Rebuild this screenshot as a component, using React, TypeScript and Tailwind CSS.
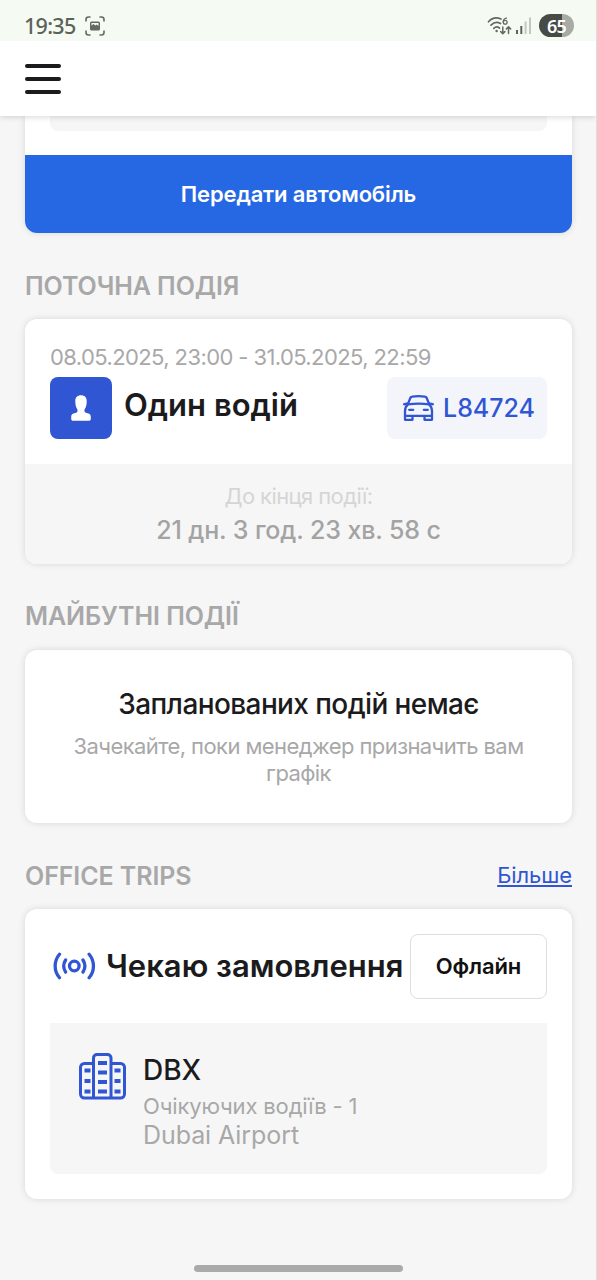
import type { ReactNode } from 'react';

function StatusBar() {
  return (
    <div className="relative z-20 h-[41px] shrink-0 bg-[#f5fbf3] flex items-center justify-between pl-6 pr-[22px] pt-[13px] pb-[3px]">
      <div className="flex items-center gap-2.5">
        <span className="font-['Noto_Sans',sans-serif] font-medium text-[21.5px] leading-6 tracking-[-0.7px] text-[#5d625b] w-[51px] whitespace-nowrap">19:35</span>
        <svg width="20" height="20" viewBox="0 0 20 20" fill="none" stroke="#646963" strokeWidth="1.6" strokeLinecap="round">
          <path d="M1 5V3.5C1 2 2 1 3.5 1H5M15 1h1.5C18 1 19 2 19 3.5V5M19 15v1.5c0 1.5-1 2.5-2.5 2.5H15M5 19H3.5C2 19 1 18 1 16.5V15" />
          <rect x="5" y="5.5" width="10" height="9" rx="1.5" fill="#646963" stroke="none" />
          <path d="M6.5 9.7l2-1.7 2 1.4 1.2-.8 1.8 1.3V7h-7z" fill="#f5fbf3" stroke="none" />
        </svg>
      </div>
      <div className="flex items-center">
        <svg width="26" height="20" viewBox="0 0 26 20" fill="none" stroke="#646963" strokeWidth="1.7" strokeLinecap="round">
          <path d="M1.5 5.8C5 1.8 10 1.3 14 3M4 9.2c3-3 6.5-3.3 9.5-1.7M6.8 12.3c1.8-1.7 4-1.7 5.7-.2" />
          <circle cx="9.6" cy="15" r="1.2" fill="#646963" stroke="none" />
          <path d="M19.5 2.2c-2 .3-3.3 2-3.3 3.9" strokeWidth="1.3" />
          <circle cx="18.2" cy="6.3" r="1.9" strokeWidth="1.3" />
          <path d="M15.8 11v6.5M13.7 15.6l2.1 2 2.1-2M21.5 17.5V11M19.4 12.9l2.1-2 2.1 2" strokeWidth="1.5" />
        </svg>
        <svg width="16" height="17" viewBox="0 0 16 17" className="ml-[3px]">
          <rect x="0" y="13" width="2" height="4" fill="#5d625b" />
          <rect x="4.3" y="9" width="2" height="8" fill="#5d625b" />
          <rect x="8.6" y="4.5" width="2" height="12.5" fill="#c2c7c0" />
          <rect x="13" y="0.5" width="2" height="16.5" fill="#c2c7c0" />
        </svg>
        <div className="ml-[7px] w-[35px] h-[23px] rounded-full bg-linear-to-r from-[#464b45] from-65% to-[#a6aba4] to-65% flex items-center justify-center">
          <span className="font-['Noto_Sans',sans-serif] font-semibold text-[18px] tracking-[-0.8px] leading-none text-white">65</span>
        </div>
      </div>
    </div>
  );
}

function PersonIcon() {
  return (
    <svg width="20" height="26" viewBox="0 0 20 26" fill="white">
      <path d="M10 .3C6.500.3 4.300 2.500 4.300 5.700c0 3.700.5 6.800 2.200 8.800v1.600c0 .9-.4 1.300-1.300 1.600L2.500 18.500C.8 19.100.2 20.400.2 22v1.700c0 1.400.8 2.100 2.100 2.100h15.400c1.300 0 2.100-.7 2.100-2.100V22c0-1.600-.6-2.900-2.300-3.500l-2.700-.8c-.9-.3-1.300-.7-1.300-1.600v-1.600c1.700-2 2.200-5.100 2.200-8.800C15.700 2.500 13.500.3 10 .3z" />
    </svg>
  );
}

function CarIcon() {
  return (
    <svg width="31" height="26" viewBox="0 0 31 26" fill="none" stroke="#3056d3" strokeWidth="2.3" strokeLinecap="round" strokeLinejoin="round">
      <path d="M1.2 9.3C2.3 8.7 3.5 8.7 5.2 8.8M29.8 9.3c-1.1-.6-2.3-.6-4-.5M4.8 9.4L7.3 3c.4-.9.9-1.3 1.900-1.4 4.2-.6 8.4-.6 12.6 0 1 .1 1.5.5 1.900 1.4l2.5 6.4" />
      <path d="M4.8 9.4c7.1-1 14.3-1 21.4 0 1.900 1.900 2.800 4.100 2.800 6.800v8.600h-7.500v-4h-12v4H2v-8.600c0-2.700.9-4.900 2.800-6.800zM2 20.800h7.500M21.500 20.800H29" />
      <path d="M6.2 14.8h4M20.8 14.8h4" />
    </svg>
  );
}

function BroadcastIcon() {
  return (
    <svg width="44" height="28" viewBox="0 0 44 28" fill="none" stroke="#3056d3" strokeWidth="3.3" strokeLinecap="round">
      <circle cx="21.3" cy="14" r="4.8" />
      <path d="M12.6 8c-2.3 3.6-2.3 8.4 0 12M30 8c2.3 3.6 2.3 8.4 0 12M6.5 2.2C.7 9 .7 19 6.5 25.8M36.1 2.2c5.8 6.8 5.8 16.8 0 23.6" />
    </svg>
  );
}

function OfficeIcon() {
  return (
    <svg width="48" height="47" viewBox="0 0 48 47" fill="none" stroke="#3056d3" strokeWidth="3">
      <path d="M15.5 45V5c0-2 1.5-3.5 3.5-3.5h10.5c2 0 3.5 1.5 3.5 3.5v40M15.5 10.5H6.5c-2.3 0-4 1.7-4 4V41c0 2.3 1.7 4 4 4h36c2.3 0 4-1.7 4-4V14.5c0-2.3-1.7-4-4-4H33" />
      <path d="M6.5 17.5h6M6.5 28h6M6.5 38.5h6M20 10h9M20 19.5h9M20 29h9M20 38.5h9M36.5 17.5h6M36.5 28h6M36.5 38.5h6" strokeWidth="4" />
    </svg>
  );
}

function Card({ className = '', children }: { className?: string; children: ReactNode }) {
  return (
    <div className={`bg-white rounded-xl overflow-hidden shadow-[0_0_7px_rgba(0,0,0,0.13)] ${className}`}>
      {children}
    </div>
  );
}

function SectionTitle({ children }: { children: ReactNode }) {
  return <h2 className="text-[25px] leading-[30px] tracking-[-0.08px] font-semibold text-[#a8a8a8] whitespace-nowrap">{children}</h2>;
}

export default function App() {
  return (
    <div className="w-[597px] h-[1280px] flex flex-col overflow-hidden bg-[#f6f6f6] border-r border-[#dedede] font-['Inter',sans-serif] text-[#1b1b1d]">
      <StatusBar />

      <header className="relative z-10 h-[75px] shrink-0 bg-white shadow-[0_1px_6px_rgba(0,0,0,0.16)] flex items-center pl-[25px]">
        <button aria-label="Menu" className="w-9 flex flex-col gap-[9px]">
          <span className="h-1 rounded-full bg-[#1b1b1d]" />
          <span className="h-1 rounded-full bg-[#1b1b1d]" />
          <span className="h-1 rounded-full bg-[#1b1b1d]" />
        </button>
      </header>

      <main className="flex flex-col pl-[25px] pr-6">
        <div className="h-[117px] bg-white rounded-b-xl overflow-hidden shadow-[0_0_7px_rgba(0,0,0,0.13)] flex flex-col">
          <div className="h-[15px] mx-[25px] mb-6 bg-[#f6f6f6] rounded-b-lg" />
          <button className="flex-1 bg-[#2668e4] text-white text-[22px] tracking-[-0.15px] font-semibold">Передати автомобіль</button>
        </div>

        <div className="mt-[38px] mb-[18px]">
          <SectionTitle>ПОТОЧНА ПОДІЯ</SectionTitle>
        </div>
        <Card className="h-[245px] flex flex-col">
          <div className="h-[145px] px-[25px] pt-[25px]">
            <p className="text-[22px] leading-[27px] tracking-[-0.6px] text-[#a8a8a8] whitespace-nowrap">08.05.2025, 23:00 - 31.05.2025, 22:59</p>
            <div className="mt-[6px] flex items-center">
              <div className="size-[62px] rounded-lg bg-[#3056d3] flex items-center justify-center">
                <PersonIcon />
              </div>
              <h3 className="ml-3 mb-1.5 text-[31px] leading-9 font-semibold whitespace-nowrap">Один водій</h3>
              <div className="ml-auto w-40 h-[62px] rounded-lg bg-[#f3f5fb] flex items-center pl-4 gap-[9px]">
                <CarIcon />
                <span className="text-[25px] leading-[30px] font-medium text-[#3056d3]">L84724</span>
              </div>
            </div>
          </div>
          <div className="flex-1 bg-[#f6f6f6] text-center pt-[18px]">
            <p className="text-[22px] leading-[28px] tracking-[-0.6px] text-[#d5d5d5]">До кінця події:</p>
            <p className="mt-[5px] text-[25px] leading-[30px] tracking-[-0.12px] font-medium text-[#a3a3a3]">21 дн. 3 год. 23 хв. 58 с</p>
          </div>
        </Card>

        <div className="mt-[37px] mb-[19px]">
          <SectionTitle>МАЙБУТНІ ПОДІЇ</SectionTitle>
        </div>
        <Card className="h-[173px] text-center px-[25px] pt-[37px]">
          <h3 className="text-[28px] leading-[34px] tracking-[-0.6px] font-medium">Запланованих подій немає</h3>
          <p className="mt-3 mx-5 text-[22px] leading-[26.5px] tracking-[-0.58px] text-[#a8a8a8]">Зачекайте, поки менеджер призначить вам графік</p>
        </Card>

        <div className="mt-[38px] mb-[18px] flex items-center justify-between">
          <SectionTitle>OFFICE TRIPS</SectionTitle>
          <a href="#" className="mb-0.5 text-[22px] leading-7 tracking-[-0.1px] text-[#3056d3] underline">Більше</a>
        </div>
        <Card className="h-[290px] p-[25px]">
          <div className="h-16 flex items-center">
            <div className="ml-[3px]">
              <BroadcastIcon />
            </div>
            <h3 className="ml-[9px] text-[31px] leading-9 font-semibold whitespace-nowrap">Чекаю замовлення</h3>
            <button className="ml-auto w-[137px] h-[65px] rounded-lg border border-[#dedede] text-[22px] tracking-[-0.12px] font-semibold text-[#111]">Офлайн</button>
          </div>
          <div className="mt-[25px] h-[151px] rounded-b-lg bg-[#f6f6f6] flex pl-7 pt-[30px]">
            <OfficeIcon />
            <div className="ml-[17px]">
              <p className="text-[28px] leading-[34px] font-medium">DBX</p>
              <p className="mt-1.5 text-[22px] leading-[27px] tracking-[-0.15px] text-[#a8a8a8]">Очікуючих водіїв - 1</p>
              <p className="text-[25px] leading-[30px] tracking-[-0.08px] text-[#a8a8a8]">Dubai Airport</p>
            </div>
          </div>
        </Card>
      </main>

      <div className="mt-auto mb-2 ml-[194px] w-[209px] h-[7px] shrink-0 rounded-full bg-[#aaaaaa]" />
    </div>
  );
}
